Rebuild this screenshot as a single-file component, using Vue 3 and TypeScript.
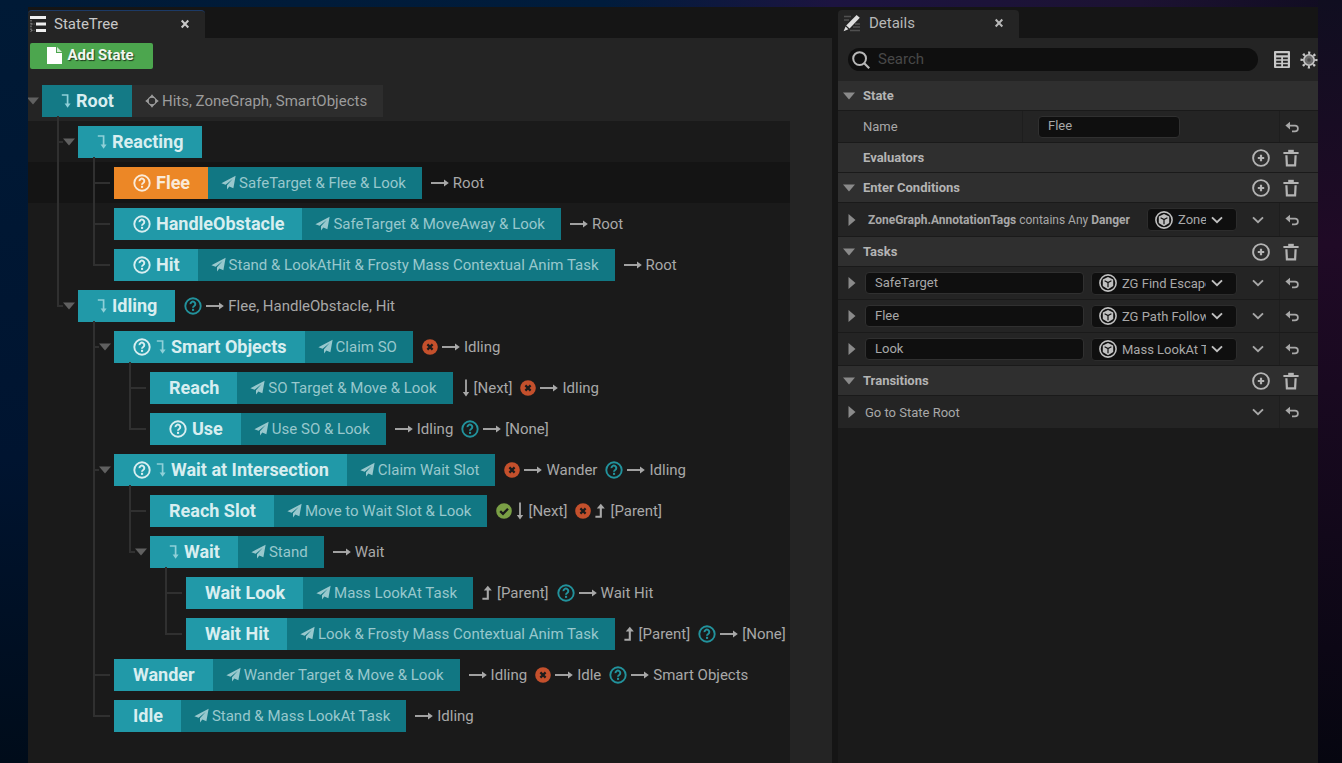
<script setup lang="ts">
import { computed, ref } from 'vue'

type LinkIcon = 'goto' | 'next' | 'parent'
type Trigger = 'fail' | 'ok' | 'cond'

interface Transition {
  trigger?: Trigger
  icon: LinkIcon
  target: string
}

interface StateNode {
  name: string
  depth: number
  cond?: boolean
  select?: boolean
  tasks?: string
  evaluators?: string
  transitions?: Transition[]
  selected?: boolean
}

const go = (target: string, trigger?: Trigger): Transition => ({ icon: 'goto', target, trigger })
const next = (trigger?: Trigger): Transition => ({ icon: 'next', target: '[Next]', trigger })
const parent = (trigger?: Trigger): Transition => ({ icon: 'parent', target: '[Parent]', trigger })

const nodes: StateNode[] = [
  { name: 'Root', depth: 0, select: true, evaluators: 'Hits, ZoneGraph, SmartObjects' },
  { name: 'Reacting', depth: 1, select: true },
  { name: 'Flee', depth: 2, cond: true, selected: true, tasks: 'SafeTarget & Flee & Look', transitions: [go('Root')] },
  { name: 'HandleObstacle', depth: 2, cond: true, tasks: 'SafeTarget & MoveAway & Look', transitions: [go('Root')] },
  { name: 'Hit', depth: 2, cond: true, tasks: 'Stand & LookAtHit & Frosty Mass Contextual Anim Task', transitions: [go('Root')] },
  { name: 'Idling', depth: 1, select: true, transitions: [go('Flee, HandleObstacle, Hit', 'cond')] },
  { name: 'Smart Objects', depth: 2, cond: true, select: true, tasks: 'Claim SO', transitions: [go('Idling', 'fail')] },
  { name: 'Reach', depth: 3, tasks: 'SO Target & Move & Look', transitions: [next(), go('Idling', 'fail')] },
  { name: 'Use', depth: 3, cond: true, tasks: 'Use SO & Look', transitions: [go('Idling'), go('[None]', 'cond')] },
  { name: 'Wait at Intersection', depth: 2, cond: true, select: true, tasks: 'Claim Wait Slot', transitions: [go('Wander', 'fail'), go('Idling', 'cond')] },
  { name: 'Reach Slot', depth: 3, tasks: 'Move to Wait Slot & Look', transitions: [next('ok'), parent('fail')] },
  { name: 'Wait', depth: 3, select: true, tasks: 'Stand', transitions: [go('Wait')] },
  { name: 'Wait Look', depth: 4, tasks: 'Mass LookAt Task', transitions: [parent(), go('Wait Hit', 'cond')] },
  { name: 'Wait Hit', depth: 4, tasks: 'Look & Frosty Mass Contextual Anim Task', transitions: [parent(), go('[None]', 'cond')] },
  { name: 'Wander', depth: 2, tasks: 'Wander Target & Move & Look', transitions: [go('Idling'), go('Idle', 'fail'), go('Smart Objects', 'cond')] },
  { name: 'Idle', depth: 2, tasks: 'Stand & Mass LookAt Task', transitions: [go('Idling')] },
]

function continues(index: number, level: number): boolean {
  for (let i = index + 1; i < nodes.length; i++) {
    if (nodes[i].depth < level) return false
    if (nodes[i].depth === level) return true
  }
  return false
}

const rows = computed(() =>
  nodes.map((node, i) => ({
    ...node,
    isParent: nodes[i + 1] !== undefined && nodes[i + 1].depth > node.depth,
    guides: Array.from({ length: node.depth }, (_, k) => ({
      own: k + 1 === node.depth,
      line: continues(i, k + 1),
    })),
  })),
)

const search = ref('')
const stateName = ref('Flee')
const tasks = ref([
  { name: 'SafeTarget', kind: 'ZG Find Escape Target' },
  { name: 'Flee', kind: 'ZG Path Follow' },
  { name: 'Look', kind: 'Mass LookAt Task' },
])
</script>

<template>
  <svg class="defs" aria-hidden="true">
    <symbol id="i-question" viewBox="0 0 18 18">
      <circle cx="9" cy="9" r="7.7" fill="none" stroke="currentColor" stroke-width="1.9" />
      <path d="M6.5 7.1a2.4 2.4 0 1 1 3.7 1.9c-.8.5-1.2.8-1.2 1.7" fill="none" stroke="currentColor" stroke-width="2" />
      <rect x="8" y="11.8" width="2.1" height="2.1" fill="currentColor" />
    </symbol>
    <symbol id="i-select" viewBox="0 0 10 16">
      <path d="M.8 2h5.8v10.5" fill="none" stroke="currentColor" stroke-width="1.7" />
      <path d="M3.6 10.6h6L6.6 14.8z" fill="currentColor" />
    </symbol>
    <symbol id="i-plane" viewBox="0 0 16 16">
      <path d="M15.6.8 13.2 14.2 8.9 12.3 6.4 15.4V11L12.4 4.2 4.9 10.4.4 8.8z" fill="currentColor" />
    </symbol>
    <symbol id="i-eval" viewBox="0 0 14 14">
      <circle cx="7" cy="7" r="4" fill="none" stroke="currentColor" stroke-width="1.4" />
      <path d="M7 .2 9.4 3.6H4.6zM7 13.8 4.6 10.4h4.8zM.2 7l3.4-2.4v4.8zM13.8 7l-3.4 2.4V4.6z" fill="currentColor" />
    </symbol>
    <symbol id="i-goto" viewBox="0 0 18 12">
      <path d="M0 6h14" stroke="currentColor" stroke-width="1.9" />
      <path d="M13 2.6 17.8 6 13 9.4z" fill="currentColor" />
    </symbol>
    <symbol id="i-next" viewBox="0 0 8 18">
      <path d="M4 .5V14" stroke="currentColor" stroke-width="1.8" />
      <path d="M.8 13h6.4L4 17.6z" fill="currentColor" />
    </symbol>
    <symbol id="i-parent" viewBox="0 0 11 16">
      <path d="M.4 13.8h5.4V4" fill="none" stroke="currentColor" stroke-width="2.1" />
      <path d="M1.8 5.4h8L5.8.8z" fill="currentColor" />
    </symbol>
    <symbol id="i-fail" viewBox="0 0 16 16">
      <circle cx="8" cy="8" r="7.8" fill="#c4502c" />
      <path d="M5.4 5.4l5.2 5.2M10.6 5.4l-5.2 5.2" stroke="#1b1b1b" stroke-width="2.2" />
    </symbol>
    <symbol id="i-ok" viewBox="0 0 16 16">
      <circle cx="8" cy="8" r="7.8" fill="#7a9f45" />
      <path d="M4.2 8.2 7 10.8l5-5" fill="none" stroke="#1b1b1b" stroke-width="2.3" />
    </symbol>
    <symbol id="i-close" viewBox="0 0 10 10">
      <path d="M1.7 1.5l6.6 7M8.3 1.5l-6.6 7" stroke="currentColor" stroke-width="2" />
    </symbol>
    <symbol id="i-down" viewBox="0 0 12 8">
      <path d="M0 .5h12L6 7.5z" fill="currentColor" />
    </symbol>
    <symbol id="i-right" viewBox="0 0 8 14">
      <path d="M.5 1v12l7-6z" fill="currentColor" />
    </symbol>
    <symbol id="i-chevron" viewBox="0 0 12 8">
      <path d="M1 1.4 6 6.2l5-4.8" fill="none" stroke="currentColor" stroke-width="1.9" />
    </symbol>
    <symbol id="i-undo" viewBox="0 0 14 12">
      <path d="M3 4.6h7a2.9 2.9 0 0 1 0 5.8H7" fill="none" stroke="currentColor" stroke-width="1.7" />
      <path d="M5 .8v7.6L.4 4.6z" fill="currentColor" />
    </symbol>
    <symbol id="i-add" viewBox="0 0 18 18">
      <circle cx="9" cy="9" r="7.9" fill="none" stroke="currentColor" stroke-width="1.9" />
      <path d="M9 5.8v6.4M5.8 9h6.4" stroke="currentColor" stroke-width="2.2" />
    </symbol>
    <symbol id="i-trash" viewBox="0 0 16 18">
      <path d="M.4 4h15.2" stroke="currentColor" stroke-width="2" />
      <path d="M5.2.8h5.6V4H5.2z" fill="currentColor" />
      <path d="M3.4 6.2l.5 10.2h8.2l.5-10.2" fill="none" stroke="currentColor" stroke-width="2.2" />
    </symbol>
    <symbol id="i-cube" viewBox="0 0 18 18">
      <circle cx="9" cy="9" r="8.1" fill="none" stroke="currentColor" stroke-width="1.6" />
      <path d="M9 3l5.2 2.6v6.4L9 15.2 3.8 12V5.6z" fill="currentColor" />
      <path d="M5.6 6.8 9 8.6l3.4-1.8M9 8.6v4.6" fill="none" stroke="#0f0f0f" stroke-width="1.2" />
    </symbol>
  </svg>

  <main class="desktop">
    <div class="window">
      <section class="panel" aria-label="StateTree">
        <header class="tabs">
          <div class="tab tab-active">
            <svg class="i16" viewBox="0 0 16 16">
              <path d="M0 1.6h16M6 8h10M6 14.4h10" stroke="#eee" stroke-width="3" />
              <path d="M1 4v12M1 8h3.4M1 14.4h3.4" stroke="#777" stroke-width="1.4" stroke-dasharray="1.6 1.2" />
            </svg>
            <span class="tab-title">StateTree</span>
            <button class="icon-btn" aria-label="Close StateTree"><svg class="i10"><use href="#i-close" /></svg></button>
          </div>
        </header>
        <div class="toolbar">
          <button class="add">
            <svg class="page" viewBox="0 0 15 17">
              <path d="M0 0h9v6h6v11H0z" fill="#fff" />
              <path d="M10 0l5 5h-5z" fill="#d5ead5" />
            </svg>
            Add State
          </button>
        </div>
        <div class="tree" role="tree">
          <div
            v-for="row in rows"
            :key="row.name"
            class="row"
            role="treeitem"
            :aria-level="row.depth + 1"
            :class="{ root: row.depth === 0, selected: row.selected }"
          >
            <span class="lead">
              <button v-if="row.depth === 0" class="icon-btn twist" aria-label="Collapse Root">
                <svg class="down"><use href="#i-down" /></svg>
              </button>
            </span>
            <span
              v-for="(g, k) in row.guides"
              :key="k"
              class="guide"
              :class="{ own: g.own, line: g.line, leaf: !row.isParent }"
            >
              <button v-if="g.own && row.isParent" class="icon-btn twist" :aria-label="'Collapse ' + row.name">
                <svg class="down"><use href="#i-down" /></svg>
              </button>
            </span>
            <span class="node">
              <span class="name">
                <svg v-if="row.cond" class="i18"><use href="#i-question" /></svg>
                <svg v-if="row.select" class="sel"><use href="#i-select" /></svg>
                <span>{{ row.name }}</span>
              </span>
              <span v-if="row.tasks" class="tasks">
                <svg class="plane"><use href="#i-plane" /></svg>
                <span>{{ row.tasks }}</span>
              </span>
              <span v-if="row.evaluators" class="evals">
                <svg class="i14"><use href="#i-eval" /></svg>
                <span>{{ row.evaluators }}</span>
              </span>
            </span>
            <span v-for="(t, k) in row.transitions" :key="'t' + k" class="transition">
              <svg v-if="t.trigger === 'cond'" class="i18 teal"><use href="#i-question" /></svg>
              <svg v-else-if="t.trigger" class="i16"><use :href="'#i-' + t.trigger" /></svg>
              <svg :class="t.icon"><use :href="'#i-' + t.icon" /></svg>
              <span>{{ t.target }}</span>
            </span>
          </div>
        </div>
      </section>

      <section class="panel" aria-label="Details">
        <header class="tabs">
          <div class="tab tab-details">
            <svg class="i18" viewBox="0 0 18 18">
              <path d="M1 2.5h7M1 6h5M12 10h5M10 13h7M7 16.5h10" stroke="#505050" stroke-width="1.3" />
              <path d="M13.6 1 16.8 3.8 6.6 14.4 3.2 11.4z" fill="#ddd" />
              <path d="M2.6 12.6 5.4 15.2.6 17.2z" fill="#ddd" />
            </svg>
            <span class="tab-title">Details</span>
            <button class="icon-btn" aria-label="Close Details"><svg class="i10"><use href="#i-close" /></svg></button>
          </div>
        </header>
        <div class="searchbar">
          <label class="search">
            <svg class="i18" viewBox="0 0 18 18">
              <circle cx="7.6" cy="7.6" r="6.4" fill="none" stroke="#b8b8b8" stroke-width="2" />
              <path d="M12.2 12.2l5 5" stroke="#b8b8b8" stroke-width="2.2" />
            </svg>
            <input v-model="search" type="text" placeholder="Search" aria-label="Search details" />
          </label>
          <button class="icon-btn" aria-label="Property matrix">
            <svg class="grid-icon" viewBox="0 0 16 17">
              <rect width="16" height="17" rx="1" fill="#c8c8c8" />
              <path d="M2.2 3.2h11.6M2.2 7.4h5M9 7.4h4.8M2.2 10.8h5M9 10.8h4.8M2.2 14.2h5M9 14.2h4.8" stroke="#242424" stroke-width="1.9" />
            </svg>
          </button>
          <button class="icon-btn" aria-label="Settings">
            <svg class="gear" viewBox="0 0 18 18">
              <circle cx="9" cy="9" r="5.2" fill="#6a6a6a" stroke="#c8c8c8" stroke-width="1.6" />
              <circle cx="9" cy="9" r="7.2" fill="none" stroke="#c8c8c8" stroke-width="2.6" stroke-dasharray="2.2 3.455" stroke-dashoffset="1.1" />
              <circle cx="9" cy="9" r="1.8" fill="#484848" />
            </svg>
          </button>
        </div>

        <div class="props">
          <div class="head">
            <svg class="down"><use href="#i-down" /></svg>
            <h2>State</h2>
          </div>
          <div class="prop name-row">
            <label class="key" for="state-name">Name</label>
            <span class="value"><input id="state-name" v-model="stateName" class="field" type="text" /></span>
            <span class="reset"><button class="icon-btn" aria-label="Reset name"><svg class="undo"><use href="#i-undo" /></svg></button></span>
          </div>
          <div class="head">
            <span class="down"></span>
            <h2>Evaluators</h2>
            <button class="icon-btn" aria-label="Add evaluator"><svg class="i18"><use href="#i-add" /></svg></button>
            <button class="icon-btn" aria-label="Clear evaluators"><svg class="trash"><use href="#i-trash" /></svg></button>
          </div>
          <div class="head">
            <svg class="down"><use href="#i-down" /></svg>
            <h2>Enter Conditions</h2>
            <button class="icon-btn" aria-label="Add condition"><svg class="i18"><use href="#i-add" /></svg></button>
            <button class="icon-btn" aria-label="Clear conditions"><svg class="trash"><use href="#i-trash" /></svg></button>
          </div>
          <div class="prop condition">
            <button class="icon-btn expand" aria-label="Expand condition"><svg class="right"><use href="#i-right" /></svg></button>
            <span class="expr"><b>ZoneGraph.AnnotationTags</b> contains Any <b>Danger</b></span>
            <label class="combo small">
              <svg class="i18"><use href="#i-cube" /></svg>
              <select aria-label="Condition type"><option>Zone Graph Tags</option></select>
              <svg class="chevron"><use href="#i-chevron" /></svg>
            </label>
            <button class="icon-btn menu" aria-label="Condition options"><svg class="chevron"><use href="#i-chevron" /></svg></button>
            <span class="reset"><button class="icon-btn" aria-label="Reset condition"><svg class="undo"><use href="#i-undo" /></svg></button></span>
          </div>
          <div class="head">
            <svg class="down"><use href="#i-down" /></svg>
            <h2>Tasks</h2>
            <button class="icon-btn" aria-label="Add task"><svg class="i18"><use href="#i-add" /></svg></button>
            <button class="icon-btn" aria-label="Clear tasks"><svg class="trash"><use href="#i-trash" /></svg></button>
          </div>
          <div v-for="task in tasks" :key="task.kind" class="prop">
            <button class="icon-btn expand" :aria-label="'Expand ' + task.name"><svg class="right"><use href="#i-right" /></svg></button>
            <input v-model="task.name" class="field grow" type="text" aria-label="Task name" />
            <label class="combo">
              <svg class="i18"><use href="#i-cube" /></svg>
              <select aria-label="Task type"><option>{{ task.kind }}</option></select>
              <svg class="chevron"><use href="#i-chevron" /></svg>
            </label>
            <button class="icon-btn menu" :aria-label="task.name + ' options'"><svg class="chevron"><use href="#i-chevron" /></svg></button>
            <span class="reset"><button class="icon-btn" :aria-label="'Reset ' + task.name"><svg class="undo"><use href="#i-undo" /></svg></button></span>
          </div>
          <div class="head">
            <svg class="down"><use href="#i-down" /></svg>
            <h2>Transitions</h2>
            <button class="icon-btn" aria-label="Add transition"><svg class="i18"><use href="#i-add" /></svg></button>
            <button class="icon-btn" aria-label="Clear transitions"><svg class="trash"><use href="#i-trash" /></svg></button>
          </div>
          <div class="prop">
            <button class="icon-btn expand" aria-label="Expand transition"><svg class="right"><use href="#i-right" /></svg></button>
            <span class="goto-label">Go to State Root</span>
            <button class="icon-btn menu" aria-label="Transition options"><svg class="chevron"><use href="#i-chevron" /></svg></button>
            <span class="reset"><button class="icon-btn" aria-label="Reset transition"><svg class="undo"><use href="#i-undo" /></svg></button></span>
          </div>
        </div>
      </section>
    </div>
  </main>
</template>

<style>
body {
  margin: 0;
  background: #050a18;
}
</style>

<style scoped>
* {
  box-sizing: border-box;
}

.defs {
  display: none;
}

.desktop {
  display: flex;
  min-height: 100vh;
  padding: 7px 24px 0 28px;
  font-family: Roboto, "Liberation Sans", sans-serif;
  color: #a8a8a8;
  background:
    linear-gradient(to bottom, #100e20, #200a26 32%, #12081a 70%, #060610) right / 24px 100% no-repeat,
    linear-gradient(to bottom, #001a36, #001430 60%, #000c1a) left / 28px 100% no-repeat,
    linear-gradient(to right, #001a36, #001c3c 45%, #1c1440 62%, #1c1232 85%, #100c20);
}

.window {
  flex: 1;
  display: grid;
  grid-template-columns: minmax(0, 1fr) 480px;
  gap: 6px;
  background: #151515;
}

.panel {
  display: flex;
  flex-direction: column;
  min-width: 0;
  background: #242424;
}

svg {
  display: block;
  flex: none;
}

.i10 { width: 10px; height: 10px; }
.i14 { width: 14px; height: 14px; }
.i16 { width: 16px; height: 16px; }
.i18 { width: 18px; height: 18px; }
.sel { width: 10px; height: 16px; color: #8fd0d8; }
.plane { width: 15px; height: 15px; }
.goto { width: 18px; height: 12px; }
.next { width: 8px; height: 18px; }
.parent { width: 11px; height: 16px; }
.down { width: 12px; height: 8px; }
.right { width: 8px; height: 14px; }
.chevron { width: 12px; height: 8px; }
.undo { width: 14px; height: 12px; }
.trash { width: 16px; height: 18px; }
.grid-icon { width: 16px; height: 17px; }
.gear { width: 18px; height: 18px; }
.page { width: 15px; height: 17px; }

.icon-btn {
  display: flex;
  align-items: center;
  justify-content: center;
  padding: 0;
  border: 0;
  background: none;
  color: inherit;
}

.tabs {
  display: flex;
  align-items: flex-end;
  height: 31px;
  background: #151515;
}

.tab {
  display: flex;
  align-items: center;
  gap: 8px;
  height: 28px;
  border-radius: 4px 4px 0 0;
  background: #242424;
  font-size: 15px;
  color: #b8b8b8;
}

.tab-title {
  flex: 1;
}

.tab-active {
  width: 177px;
  padding: 0 15px 2px 2px;
  border-top: 1px solid #1c3a66;
  color: #c8c8c8;
}

.tab-details {
  width: 181px;
  padding: 0 15px 2px 5px;
}

.toolbar {
  padding: 5px 2px 11px;
}

.add {
  display: flex;
  align-items: center;
  justify-content: center;
  gap: 5px;
  width: 123px;
  height: 26px;
  padding: 0 18px 2px 16px;
  border: 0;
  border-radius: 2px;
  background: #4ca64e;
  color: #f0f6f0;
  font: bold 15px Roboto, "Liberation Sans", sans-serif;
  text-shadow: 1px 1px 1px #1c3a1c;
  white-space: nowrap;
}

.tree {
  flex: 1;
  margin-right: 42px;
  overflow: hidden;
  background: #1a1a1a;
}

.row {
  display: flex;
  align-items: center;
  height: 41px;
  white-space: nowrap;
}

.row.root { background: #242424; }
.row.selected { background: #141414; }

.lead {
  display: flex;
  flex: none;
  width: 14px;
}

.lead .twist {
  margin-left: -1px;
}

.twist {
  color: #606060;
}

.guide {
  position: relative;
  display: flex;
  align-items: center;
  flex: none;
  width: 36px;
  height: 100%;
}

.guide .twist {
  margin-left: 21px;
}

.guide.line::before,
.guide.own::before {
  content: "";
  position: absolute;
  left: 15px;
  top: -5px;
  bottom: 0;
  width: 2px;
  background: #303030;
}

.guide.own:not(.line)::before {
  bottom: 20px;
}

.guide.own::after {
  content: "";
  position: absolute;
  left: 15px;
  top: 20px;
  width: 6px;
  height: 2px;
  background: #303030;
}

.guide.own.leaf::after {
  width: 17px;
}

.node {
  display: flex;
  flex: none;
  height: 32px;
  margin-right: 9px;
}

.name,
.tasks,
.evals {
  display: flex;
  align-items: center;
}

.name {
  gap: 5px;
  padding: 0 18px 0 19px;
  background: #2199a8;
  color: #d8eef0;
  font-size: 18px;
  font-weight: bold;
}

.root .name { background: #147a86; }
.selected .name { background: #ec8726; color: #faead8; }

.tasks {
  gap: 3px;
  padding: 0 16px 0 13px;
  background: #117783;
  color: #98c8cd;
  font-size: 15px;
}

.evals {
  gap: 3px;
  padding: 0 16px 0 13px;
  background: #2d2d2d;
  color: #9c9c9c;
  font-size: 15px;
}

.transition {
  display: flex;
  align-items: center;
  gap: 4px;
  margin-right: 8px;
  color: #a8a8a8;
  font-size: 15px;
}

.teal {
  color: #22929c;
}

.searchbar {
  display: flex;
  align-items: center;
  gap: 10px;
  height: 43px;
  padding: 0 0 0 10px;
}

.search {
  display: flex;
  align-items: center;
  gap: 8px;
  flex: 1;
  height: 23px;
  margin-right: 6px;
  padding: 0 12px 0 4px;
  border-radius: 12px;
  background: #0f0f0f;
}

.search input {
  flex: 1;
  min-width: 0;
  padding: 0 0 2px;
  border: 0;
  outline: 0;
  background: none;
  color: #c0c0c0;
  font: 15px Roboto, "Liberation Sans", sans-serif;
}

.search input::placeholder {
  color: #484848;
}

.props {
  flex: 1;
  background: #1a1a1a;
  font-size: 13px;
}

.head,
.prop {
  display: flex;
  align-items: center;
  border-bottom: 1px solid #1a1a1a;
}

.head {
  height: 30px;
  gap: 13px;
  padding: 0 19px 0 5px;
  background: #2f2f2f;
  color: #b4b4b4;
}

.head .down {
  color: #8a8a8a;
}

.head h2 {
  flex: 1;
  margin: 0 0 0 -5px;
  font-size: 13px;
  font-weight: bold;
}

.prop {
  height: 33px;
  background: #242424;
}

.prop.condition { height: 34px; }
.prop.name-row { height: 32px; }

.key {
  width: 185px;
  height: 100%;
  padding: 8px 0 0 25px;
  border-right: 1px solid #1e1e1e;
}

.value {
  flex: 1;
  padding-left: 15px;
}

.field {
  width: 142px;
  height: 22px;
  padding: 0 9px 2px;
  border: 1px solid #303030;
  border-radius: 4px;
  background: #0f0f0f;
  color: #a8a8a8;
  font: 13px Roboto, "Liberation Sans", sans-serif;
}

.field.grow {
  flex: 1;
  min-width: 0;
  margin-right: 7px;
}

.expand {
  width: 27px;
  color: #8a8a8a;
}

.expr {
  flex: 1;
  min-width: 0;
  padding-left: 3px;
  overflow: hidden;
  white-space: nowrap;
  font-size: 12px;
}

.goto-label {
  flex: 1;
}

.combo {
  display: flex;
  align-items: center;
  gap: 5px;
  width: 146px;
  height: 23px;
  padding: 0 13px 0 7px;
  border: 1px solid #2c2c2c;
  border-radius: 4px;
  background: #0f0f0f;
  color: #c0c0c0;
}

.combo.small {
  width: 90px;
}

.combo select {
  flex: 1;
  min-width: 0;
  padding: 0;
  border: 0;
  outline: 0;
  appearance: none;
  overflow: hidden;
  background: none;
  color: #a8a8a8;
  font: 13px Roboto, "Liberation Sans", sans-serif;
}

.menu {
  width: 42px;
}

.reset {
  display: flex;
  align-items: center;
  height: 100%;
  width: 39px;
  padding-left: 5px;
  border-left: 1px solid #1e1e1e;
}
</style>
